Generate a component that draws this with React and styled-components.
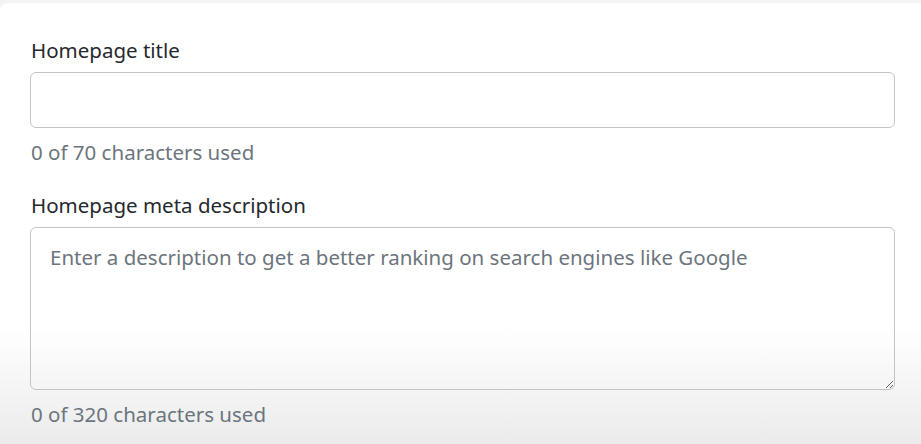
import React from 'react'
import styled, { createGlobalStyle } from 'styled-components'

const GlobalStyle = createGlobalStyle`
html, body {
  margin: 0;
  padding: 0;
  height: 100%;
}
body {
  font-family: "Noto Sans", "Open Sans", sans-serif;
  background: #f3f3f3;
}
`

const Page = styled.div`
  height: 444px;
  padding-top: 3px;
  box-sizing: border-box;
  overflow: hidden;
`

const Card = styled.div`
  height: 100%;
  border-top-left-radius: 8px;
  background: linear-gradient(to bottom, #ffffff 0, #ffffff 325px, #ebebeb 441px);
  padding: 33px 26px 0 30px;
  box-sizing: border-box;
`

const Field = styled.div`
  display: flex;
  flex-direction: column;
  margin-bottom: ${props => props.gap || 0}px;
`

const Label = styled.label`
  font-size: 20.5px;
  line-height: 28px;
  color: #25292d;
  padding-left: 1px;
  margin-bottom: 8px;
`

const Input = styled.input`
  height: 56px;
  box-sizing: border-box;
  border: 1px solid #c4c4c4;
  border-radius: 6px;
  background: #fff;
  font: inherit;
  font-size: 20.5px;
  padding: 0 19px;
  outline: none;
`

const TextArea = styled.textarea`
  height: 163px;
  box-sizing: border-box;
  border: 1px solid #c4c4c4;
  border-radius: 6px;
  background: transparent;
  font: inherit;
  font-size: 20.5px;
  line-height: 30px;
  padding: 14px 19px;
  resize: vertical;
  outline: none;
  &::placeholder {
    color: #6c757d;
  }
`

const Help = styled.div`
  font-size: 20.5px;
  line-height: 28px;
  color: #6c757d;
  margin-top: 10px;
  padding-left: 1px;
`

export default function App() {
  return (
    <>
      <GlobalStyle />
      <Page>
        <Card>
          <Field gap={25}>
            <Label>Homepage title</Label>
            <Input type="text" />
            <Help>0 of 70 characters used</Help>
          </Field>
          <Field>
            <Label>Homepage meta description</Label>
            <TextArea placeholder="Enter a description to get a better ranking on search engines like Google" />
            <Help>0 of 320 characters used</Help>
          </Field>
        </Card>
      </Page>
    </>
  )
}
